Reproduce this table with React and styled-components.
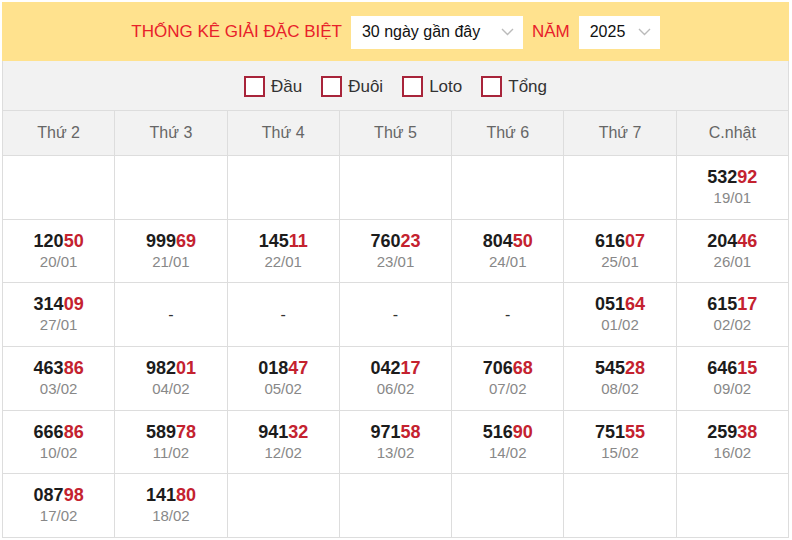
import React from "react";
import styled, { createGlobalStyle } from "styled-components";

const Global = createGlobalStyle`
	body {
		margin: 0;
		background: #fff;
		font-family: "Liberation Sans", Arial, sans-serif;
	}
`;

const Wrap = styled.div`
	margin: 2px 3px 3px 2px;
`;

const Head = styled.div`
	display: flex;
	align-items: center;
	justify-content: center;
	gap: 9px;
	height: 59px;
	padding-top: 1px;
	box-sizing: border-box;
	background-color: #ffe28e;
`;

const Title = styled.span`
	color: #e8202a;
	font-size: 17px;
`;

const Select = styled.div`
	display: flex;
	align-items: center;
	justify-content: space-between;
	gap: 8px;
	height: 33px;
	width: ${(p) => p.$w}px;
	padding: 0 9px 0 11px;
	box-sizing: border-box;
	background: #fff;
	color: #111;
	font-size: 16px;
`;

const Filters = styled.div`
	display: flex;
	align-items: center;
	justify-content: center;
	gap: 19px;
	height: 49px;
	padding-top: 2px;
	background-color: #f2f2f2;
	border-left: 1px solid #ddd;
	border-right: 1px solid #ddd;
	box-sizing: border-box;
`;

const Check = styled.label`
	display: flex;
	align-items: center;
	gap: 6px;
	font-size: 17px;
	color: #333;
	span:first-child {
		width: 17px;
		height: 17px;
		border: 2px solid #a8243a;
		background: #fff;
	}
`;

const Table = styled.table`
	width: 100%;
	border-collapse: collapse;
	table-layout: fixed;
`;

const Th = styled.th`
	height: 44px;
	padding: 0;
	background: #f2f2f2;
	border: 1px solid #ddd;
	color: #666;
	font-size: 16px;
	font-weight: normal;
`;

const Td = styled.td`
	height: 62.7px;
	padding: 0;
	border: 1px solid #ddd;
	text-align: center;
	vertical-align: middle;
`;

const Num = styled.div`
	font-size: 18px;
	font-weight: bold;
	color: #1c1c1c;
	line-height: 21px;
	b {
		color: #c4222f;
	}
`;

const Date = styled.div`
	font-size: 15px;
	color: #888;
	line-height: 20px;
`;

const Dash = styled.span`
	font-size: 16px;
	color: #333;
`;

const Chevron = () => (
	<svg width="13" height="8" viewBox="0 0 13 8">
		<path d="M1 1l5.5 5.5L12 1" fill="none" stroke="#bbb" strokeWidth="1.4" />
	</svg>
);

const days = ["Thứ 2", "Thứ 3", "Thứ 4", "Thứ 5", "Thứ 6", "Thứ 7", "C.nhật"];

const rows = [
	[null, null, null, null, null, null, ["53292", "19/01"]],
	[["12050", "20/01"], ["99969", "21/01"], ["14511", "22/01"], ["76023", "23/01"], ["80450", "24/01"], ["61607", "25/01"], ["20446", "26/01"]],
	[["31409", "27/01"], "-", "-", "-", "-", ["05164", "01/02"], ["61517", "02/02"]],
	[["46386", "03/02"], ["98201", "04/02"], ["01847", "05/02"], ["04217", "06/02"], ["70668", "07/02"], ["54528", "08/02"], ["64615", "09/02"]],
	[["66686", "10/02"], ["58978", "11/02"], ["94132", "12/02"], ["97158", "13/02"], ["51690", "14/02"], ["75155", "15/02"], ["25938", "16/02"]],
	[["08798", "17/02"], ["14180", "18/02"], null, null, null, null, null],
];

function Cell({ v }) {
	if (!v) return <Td />;
	if (v === "-") return <Td><Dash>-</Dash></Td>;
	return (
		<Td>
			<Num>
				{v[0].slice(0, 3)}
				<b>{v[0].slice(3)}</b>
			</Num>
			<Date>{v[1]}</Date>
		</Td>
	);
}

export default function App() {
	return (
		<Wrap>
			<Global />
			<Head>
				<Title>THỐNG KÊ GIẢI ĐẶC BIỆT</Title>
				<Select $w={172}>
					30 ngày gần đây
					<Chevron />
				</Select>
				<Title>NĂM</Title>
				<Select $w={81}>
					2025
					<Chevron />
				</Select>
			</Head>
			<Filters>
				{["Đầu", "Đuôi", "Loto", "Tổng"].map((t) => (
					<Check key={t}>
						<span />
						<span>{t}</span>
					</Check>
				))}
			</Filters>
			<Table>
				<thead>
					<tr>
						{days.map((d) => (
							<Th key={d}>{d}</Th>
						))}
					</tr>
				</thead>
				<tbody>
					{rows.map((r, i) => (
						<tr key={i}>
							{r.map((v, j) => (
								<Cell key={j} v={v} />
							))}
						</tr>
					))}
				</tbody>
			</Table>
		</Wrap>
	);
}
